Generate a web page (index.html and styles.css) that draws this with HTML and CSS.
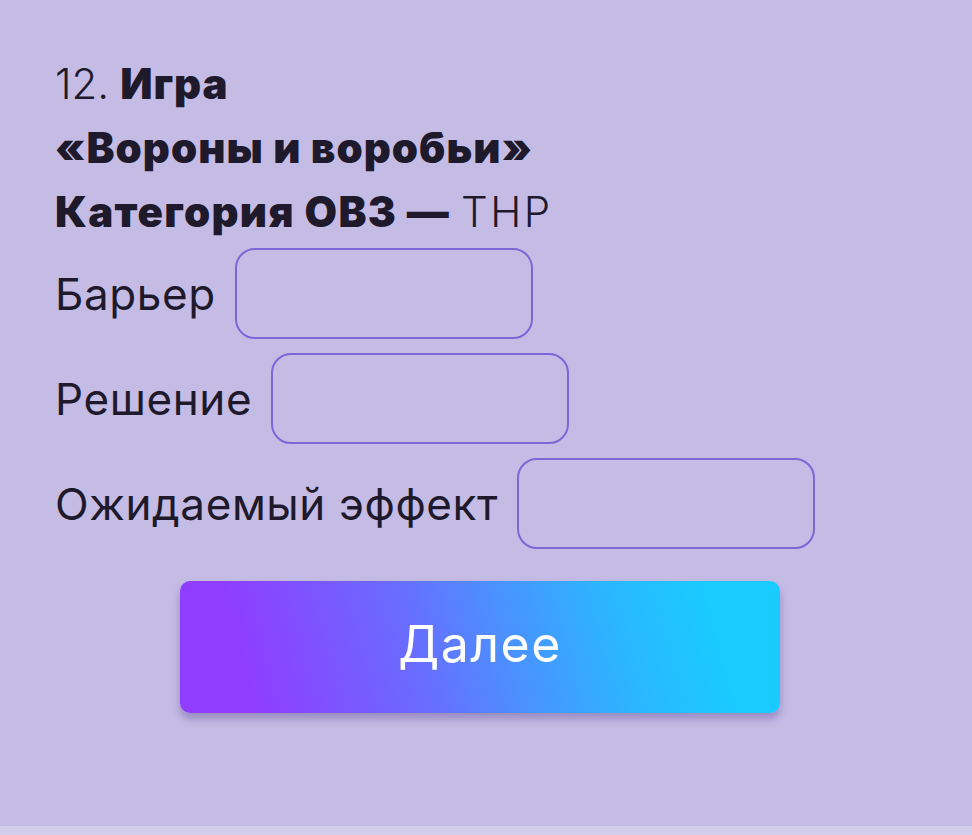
FILE: index.html
```html
<!DOCTYPE html>
<html lang="ru">
<head>
<meta charset="utf-8">
<title>Игра «Вороны и воробьи»</title>
<link rel="stylesheet" href="styles.css">
</head>
<body>
<main class="page">
  <section class="card">
    <h1 class="title">
      <span class="line"><span class="num">12.</span> <b>Игра</b></span>
      <span class="line"><b>«Вороны и воробьи»</b></span>
      <span class="line"><b class="wide">Категория ОВЗ —</b> <span class="light">ТНР</span></span>
    </h1>
    <div class="field">
      <label class="label" for="barrier">Барьер</label>
      <input class="box" id="barrier" type="text">
    </div>
    <div class="field">
      <label class="label" for="solution">Решение</label>
      <input class="box" id="solution" type="text">
    </div>
    <div class="field">
      <label class="label" for="effect">Ожидаемый эффект</label>
      <input class="box" id="effect" type="text">
    </div>
    <div class="actions">
      <button class="next" type="button">Далее</button>
    </div>
  </section>
</main>
</body>
</html>
```

FILE: styles.css
```css
html {
  background: #d3cdec;
}

body {
  margin: 0;
  font-family: Inter, "Noto Sans", sans-serif;
  color: #1e1a2c;
}

.page {
  background: #c5bce6;
  min-height: 826px;
  box-sizing: border-box;
  padding: 52px 0 0 55px;
}

.card {
  display: flex;
  flex-direction: column;
}

.title {
  margin: 0 0 4px;
  font-size: 42px;
  line-height: 64px;
  font-weight: 700;
  letter-spacing: 1px;
}

.title .line {
  display: block;
}

.title .num {
  font-weight: 300;
  letter-spacing: 0;
}

.title .wide {
  letter-spacing: 1.3px;
}

.title .light {
  font-weight: 300;
  letter-spacing: 2.5px;
}

.field {
  display: flex;
  align-items: center;
  gap: 19px;
  margin-bottom: 14px;
}

.label {
  font-size: 44px;
  font-weight: 400;
  letter-spacing: 0.6px;
}

.box {
  width: 298px;
  height: 91px;
  box-sizing: border-box;
  border: 2.5px solid #7d66d6;
  border-radius: 20px;
  background: transparent;
  font: inherit;
  outline: none;
}

.actions {
  padding-top: 18px;
  padding-left: 125px;
}

.next {
  width: 600px;
  height: 132px;
  border: 0;
  border-radius: 10px;
  background: linear-gradient(75deg, #8f3dff 12%, #6b6aff 38%, #4a92ff 55%, #2bb6ff 72%, #19cbff 88%);
  box-shadow: 0 6px 8px rgba(70, 50, 130, 0.35);
  color: #ffffff;
  font-family: inherit;
  font-size: 50px;
  font-weight: 400;
  letter-spacing: 1.5px;
  padding: 0 0 6px;
  cursor: pointer;
}
```
